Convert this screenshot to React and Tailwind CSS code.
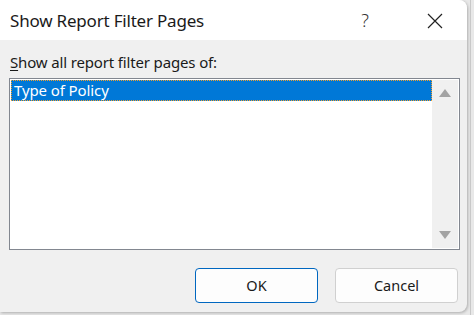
export default function App() {
  return (
    <div className="w-[474px] h-[315px] bg-[#e8e8e8] flex overflow-hidden" style={{ fontFamily: '"Noto Sans", "Open Sans", sans-serif' }}>
      <div className="w-[467px] h-[312px] bg-[#f0f0f0] rounded-tr-[8px] rounded-br-[8px] flex flex-col shadow-[1px_1px_3px_rgba(0,0,0,0.25)] overflow-hidden">
        <div className="h-[40px] bg-white flex items-center pl-[10px] pt-[1px] shrink-0">
          <span className="text-[17px] text-[#1a1a1a] tracking-[-0.2px]">Show Report Filter Pages</span>
          <span className="ml-auto text-[18px] text-[#333] font-light mr-[58px]">?</span>
          <svg width="16" height="16" viewBox="0 0 16 16" className="mr-[24px]">
            <path d="M1 1 L15 15 M15 1 L1 15" stroke="#222" strokeWidth="1.2" fill="none" />
          </svg>
        </div>
        <div className="pl-[10px] pt-[13px] text-[15px] text-[#1a1a1a] leading-[19px] tracking-[-0.15px]">
          <span className="underline underline-offset-2">S</span>how all report filter pages of:
        </div>
        <div className="ml-[9px] mt-[6px] w-[451px] h-[172px] border border-[#828790] bg-white flex p-[1px]">
          <div className="flex-1">
            <div className="h-[21px] bg-[#0078d7] outline-1 outline-dotted outline-[#f0a030] -outline-offset-1 flex items-center pl-[3px] text-white text-[15px] tracking-[-0.1px]">
              Type of Policy
            </div>
          </div>
          <div className="w-[26px] bg-[#f0f0f0] flex flex-col items-center justify-between py-[9px]">
            <svg width="12" height="8" viewBox="0 0 12 8"><path d="M6 0 L12 8 L0 8 Z" fill="#a3a3a3" /></svg>
            <svg width="12" height="8" viewBox="0 0 12 8"><path d="M0 0 L12 0 L6 8 Z" fill="#a3a3a3" /></svg>
          </div>
        </div>
        <div className="flex gap-[17px] ml-[195px] mt-[18px]">
          <button className="w-[123px] h-[35px] bg-[#fdfdfd] border border-[#0067c0] rounded-[4px] text-[14.5px] text-[#1a1a1a]">OK</button>
          <button className="w-[123px] h-[35px] bg-[#fdfdfd] border border-[#d0d0d0] rounded-[4px] text-[14.5px] text-[#1a1a1a]">Cancel</button>
        </div>
      </div>
      <div className="flex-1 flex">
        <div className="w-[3px]" />
        <div className="w-[1px] bg-[#c8c8c8]" />
      </div>
    </div>
  );
}
